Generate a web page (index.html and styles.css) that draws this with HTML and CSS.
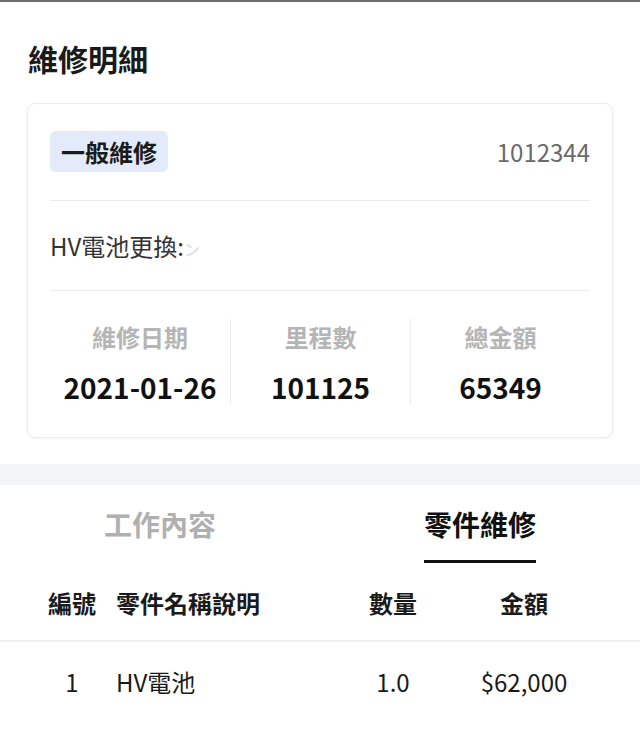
FILE: index.html
```html
<!DOCTYPE html>
<html lang="zh-Hant">
<head>
<meta charset="utf-8">
<link rel="stylesheet" href="styles.css">
</head>
<body>
<div class="page">
  <section class="summary">
    <h1 class="title">維修明細</h1>
    <div class="card">
      <div class="card-head">
        <span class="badge">一般維修</span>
        <span class="order-no">1012344</span>
      </div>
      <div class="card-desc">HV電池更換:<span class="redacted">ン</span></div>
      <div class="stats">
        <div class="stat">
          <div class="stat-label">維修日期</div>
          <div class="stat-value">2021-01-26</div>
        </div>
        <div class="stat">
          <div class="stat-label">里程數</div>
          <div class="stat-value">101125</div>
        </div>
        <div class="stat">
          <div class="stat-label">總金額</div>
          <div class="stat-value">65349</div>
        </div>
      </div>
    </div>
  </section>
  <div class="band"></div>
  <nav class="tabs">
    <div class="tab">工作內容</div>
    <div class="tab active">零件維修</div>
  </nav>
  <div class="table">
    <div class="row head">
      <div class="c-no">編號</div>
      <div class="c-name">零件名稱說明</div>
      <div class="c-qty">數量</div>
      <div class="c-amt">金額</div>
    </div>
    <div class="row">
      <div class="c-no">1</div>
      <div class="c-name">HV電池</div>
      <div class="c-qty">1.0</div>
      <div class="c-amt">$62,000</div>
    </div>
  </div>
</div>
</body>
</html>
```

FILE: styles.css
```css
* { box-sizing: border-box; margin: 0; padding: 0; }
html, body { background: #fff; }
body {
  font-family: "Noto Sans CJK TC", "Noto Sans", sans-serif;
  color: #1a1a1a;
  width: 640px;
  border-top: 2px solid #6e6e6e;
}
.summary { padding: 36px 27px 26px 27px; }
.title {
  font-size: 30px;
  line-height: 40px;
  font-weight: 700;
  color: #1a1a1a;
  padding-left: 1px;
}
.card {
  margin-top: 25px;
  border: 1px solid #ececec;
  border-radius: 8px;
  box-shadow: 0 1px 3px rgba(0,0,0,0.04);
  padding: 0 22px;
}
.card-head {
  display: flex;
  align-items: center;
  justify-content: space-between;
  padding: 27px 0 28px;
  border-bottom: 1px solid #ebebeb;
}
.badge {
  background: #e3ebfa;
  border-radius: 6px;
  font-size: 24px;
  font-weight: 700;
  line-height: 33px;
  padding: 4px 11px;
  color: #1a1a1a;
}
.order-no {
  font-size: 24px;
  line-height: 33px;
  color: #6a6a6a;
}
.card-desc {
  font-size: 24px;
  line-height: 32px;
  height: 90px;
  padding: 29px 0;
  color: #333;
  border-bottom: 1px solid #ebebeb;
  overflow: hidden;
}
.redacted {
  display: inline-block;
  color: #d8d8d8;
  font-size: 16px;
  line-height: 16px;
  vertical-align: middle;
}
.stats {
  display: grid;
  grid-template-columns: 1fr 1fr 1fr;
  padding: 28px 0 32px;
}
.stat {
  display: flex;
  flex-direction: column;
  align-items: center;
  gap: 14px;
}
.stat + .stat { border-left: 1px solid #eeeeee; }
.stat-label {
  font-size: 24px;
  line-height: 36px;
  font-weight: 700;
  color: #b5b5b5;
}
.stat-value {
  font-size: 28px;
  line-height: 36px;
  font-weight: 700;
  color: #111;
}
.band { height: 21px; background: #f4f5f7; }
.tabs {
  display: grid;
  grid-template-columns: 1fr 1fr;
}
.tab {
  justify-self: center;
  font-size: 28px;
  line-height: 36px;
  font-weight: 700;
  color: #b0b0b0;
  padding: 21px 0 18px;
  border-bottom: 3px solid transparent;
}
.tab.active {
  color: #111;
  border-bottom-color: #111;
}
.row {
  display: grid;
  grid-template-columns: 68px 1fr 106px 156px;
  padding: 23px 38px 20px 38px;
  font-size: 24px;
  line-height: 34px;
  color: #1a1a1a;
}
.row.head {
  font-weight: 700;
  border-bottom: 2px solid #efefef;
}
.c-no, .c-qty, .c-amt { text-align: center; }
.c-name { padding-left: 10px; }
```
